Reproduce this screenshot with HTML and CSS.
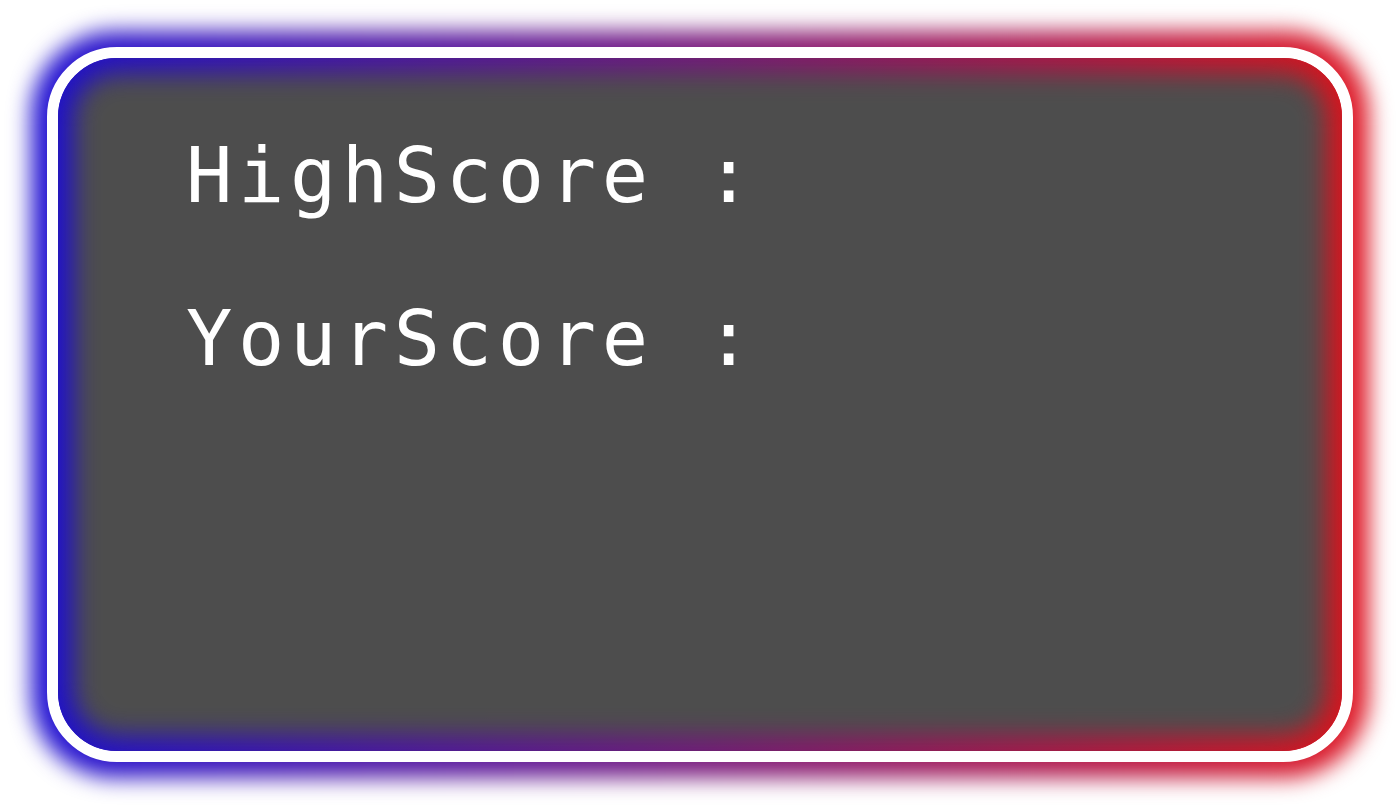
FILE: index.html
```html
<!DOCTYPE html>
<html>
<head>
<meta charset="utf-8">
<link rel="stylesheet" href="styles.css">
</head>
<body>
<div class="stage">
  <div class="frame">
    <div class="panel">
      <div class="content">
        <div class="line">HighScore :</div>
        <div class="line">YourScore :</div>
      </div>
    </div>
  </div>
</div>
</body>
</html>
```
FILE: styles.css
```css
html, body {
  margin: 0;
  padding: 0;
  background: #ffffff;
}
body {
  width: 1399px;
  height: 809px;
  overflow: hidden;
}
.stage {
  position: relative;
  margin: 47px 0 0 47px;
  width: 1306px;
  height: 715px;
}
.stage::before {
  content: "";
  position: absolute;
  inset: -16px;
  border-radius: 84px;
  background: linear-gradient(to right, #2416d4, #7c1f80 50%, #e01c28);
  filter: blur(11px);
}
.frame {
  position: relative;
  width: 100%;
  height: 100%;
  box-sizing: border-box;
  border: 11px solid #ffffff;
  border-radius: 70px;
}
.panel {
  position: relative;
  height: 100%;
  border-radius: 59px;
  overflow: hidden;
  background: linear-gradient(to right, #2012c8, #701c78 50%, #d4161f);
}
.panel::before {
  content: "";
  position: absolute;
  inset: 16px;
  border-radius: 44px;
  background: #4d4d4d;
  filter: blur(12px);
}
.content {
  position: relative;
  padding: 68px 0 0 128px;
  font-family: "DejaVu Sans Mono", "Liberation Mono", monospace;
  font-size: 77px;
  letter-spacing: 5.6px;
  color: #ffffff;
}
.line {
  height: 163px;
  line-height: 100px;
}
```
